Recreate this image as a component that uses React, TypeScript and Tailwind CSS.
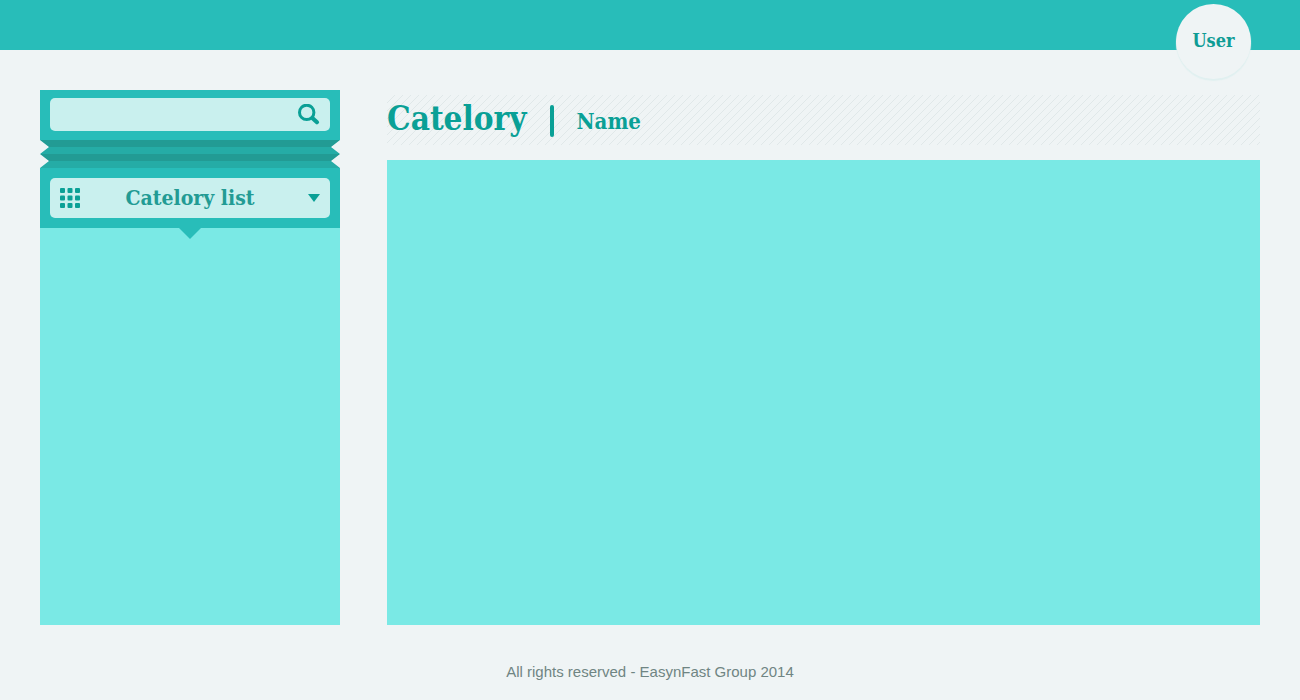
const slab = "font-['DejaVu_Serif_Condensed','DejaVu_Serif',serif] font-bold";

function SearchIcon() {
  return (
    <svg viewBox="0 0 22 22" className="h-[22px] w-[22px]" fill="none" stroke="#0aa096" aria-hidden="true">
      <circle cx="8.7" cy="8.4" r="7.2" strokeWidth="3" />
      <path d="M14.6 14.2 19 18.2" strokeWidth="4.2" strokeLinecap="round" />
    </svg>
  );
}

function GridIcon() {
  const steps = [0, 7.5, 15];
  return (
    <svg viewBox="0 0 20 20" className="h-5 w-5" fill="#0aa096" aria-hidden="true">
      {steps.map((y) => steps.map((x) => <rect key={`${x}-${y}`} x={x} y={y} width="5" height="5" rx="1" />))}
    </svg>
  );
}

function Header() {
  return (
    <header className="flex h-[50px] items-start justify-end bg-[#28bdb9] pr-[49px] pt-1">
      <button
        type="button"
        className={`${slab} relative h-[75px] w-[75px] shrink-0 rounded-full bg-[#eff4f5] pb-0.5 text-[18px] leading-6 text-[#0f9c95] shadow-[0_2px_1px_#e0f0f0]`}
      >
        User
      </button>
    </header>
  );
}

function Folds() {
  return (
    <div className="[clip-path:polygon(0_0,100%_0,calc(100%_-_9px)_25%,100%_50%,calc(100%_-_9px)_75%,100%_100%,0_100%,9px_75%,0_50%,9px_25%)]">
      <div className="h-[7px] bg-[#229b94]" />
      <div className="h-[7px] bg-[#25aca6]" />
      <div className="h-[7px] bg-[#229b94]" />
      <div className="h-[7px] bg-[#25aca6]" />
    </div>
  );
}

function Sidebar() {
  return (
    <aside className="flex w-[300px] shrink-0 flex-col">
      <form role="search" className="h-[50px] bg-[#28bdb9] px-[10px] pt-2" onSubmit={(e) => e.preventDefault()}>
        <div className="flex h-[33px] items-center rounded-[5px] bg-[#c9f0ee] pr-[10px]">
          <input type="search" aria-label="Search" className="h-full min-w-0 flex-1 bg-transparent px-3 text-[#0f9c95] outline-none" />
          <button type="submit" aria-label="Submit search">
            <SearchIcon />
          </button>
        </div>
      </form>
      <Folds />
      <div className="bg-[#28bdb9] p-[10px]">
        <button
          type="button"
          className="grid h-10 w-full grid-cols-[20px_1fr_20px] items-center rounded-[5px] bg-[#c9f0ee] px-[10px]"
        >
          <GridIcon />
          <span className={`${slab} text-[21px] leading-6 text-[#229b94]`}>Catelory list</span>
          <svg viewBox="0 0 12 8" className="h-2 w-3 justify-self-end" fill="#0aa096" aria-hidden="true">
            <path d="M0 0H12L6 8Z" />
          </svg>
        </button>
      </div>
      <div className="flex flex-1 justify-center bg-[#7ae9e5]">
        <svg viewBox="0 0 22 11" className="h-[11px] w-[22px]" fill="#28bdb9" aria-hidden="true">
          <path d="M0 0H22L11 11Z" />
        </svg>
      </div>
    </aside>
  );
}

function Content() {
  return (
    <section className="flex min-w-0 flex-1 flex-col">
      <div
        className={`${slab} my-[5px] flex h-[50px] items-center bg-[linear-gradient(135deg,transparent_44%,#e0e8e9_47%,#e0e8e9_53%,transparent_56%)] bg-size-[8px_8px] pb-0.5 text-[#0aa096]`}
      >
        <h1 className="text-[33px] leading-10">Catelory</h1>
        <span className="ml-6 mt-1 h-8 w-1 rounded-sm bg-[#0aa096]" />
        <h2 className="ml-[22px] mt-1 text-[22px] leading-7">Name</h2>
      </div>
      <div className="mt-[10px] flex-1 bg-[#7ae9e5]" />
    </section>
  );
}

export default function App() {
  return (
    <div className="flex min-h-screen flex-col bg-[#eff4f5]">
      <Header />
      <main className="flex flex-1 gap-[47px] px-10 pt-10">
        <Sidebar />
        <Content />
      </main>
      <footer className="flex h-[75px] items-center justify-center pt-[18px] font-['Liberation_Sans',Arial,sans-serif] text-[15px] leading-5 text-[#6f8583]">
        All rights reserved - EasynFast Group 2014
      </footer>
    </div>
  );
}
